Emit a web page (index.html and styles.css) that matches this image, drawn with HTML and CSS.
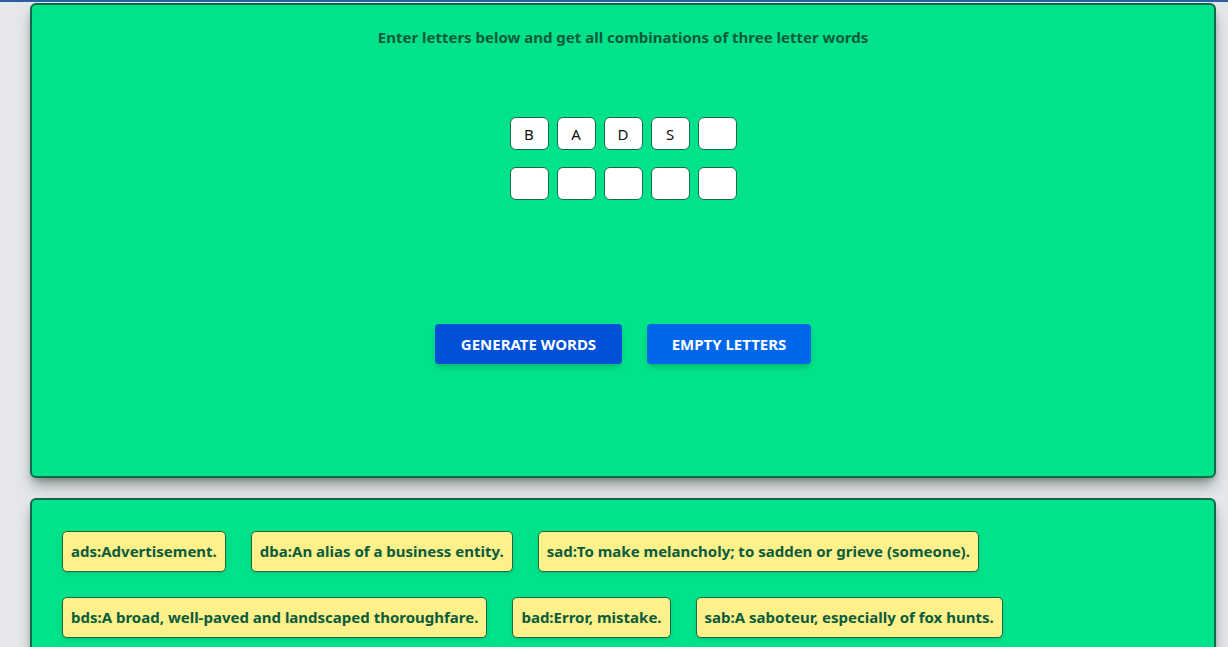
FILE: index.html
```html
<!DOCTYPE html>
<html lang="en">
<head>
<meta charset="utf-8">
<title>Three letter words</title>
<link rel="stylesheet" href="styles.css">
</head>
<body>
<div class="topline"></div>
<main class="page">
  <section class="card card-input">
    <h1 class="title">Enter letters below and get all combinations of three letter words</h1>
    <div class="letters">
      <div class="letter-row">
        <input class="letter" type="text" maxlength="1" value="B">
        <input class="letter" type="text" maxlength="1" value="A">
        <input class="letter" type="text" maxlength="1" value="D">
        <input class="letter" type="text" maxlength="1" value="S">
        <input class="letter" type="text" maxlength="1" value="">
      </div>
      <div class="letter-row">
        <input class="letter" type="text" maxlength="1" value="">
        <input class="letter" type="text" maxlength="1" value="">
        <input class="letter" type="text" maxlength="1" value="">
        <input class="letter" type="text" maxlength="1" value="">
        <input class="letter" type="text" maxlength="1" value="">
      </div>
    </div>
    <div class="actions">
      <button class="btn btn-generate">GENERATE WORDS</button>
      <button class="btn btn-empty">EMPTY LETTERS</button>
    </div>
  </section>
  <section class="card card-results">
    <div class="chips">
      <span class="chip">ads:Advertisement.</span>
      <span class="chip">dba:An alias of a business entity.</span>
      <span class="chip">sad:To make melancholy; to sadden or grieve (someone).</span>
      <span class="chip">bds:A broad, well-paved and landscaped thoroughfare.</span>
      <span class="chip">bad:Error, mistake.</span>
      <span class="chip">sab:A saboteur, especially of fox hunts.</span>
    </div>
  </section>
</main>
</body>
</html>
```
FILE: styles.css
```css
* { box-sizing: border-box; }
html, body { margin: 0; padding: 0; }
body {
  background: #e5e7eb;
  font-family: "Noto Sans", "Open Sans", sans-serif;
  color: #065f46;
  overflow: hidden;
  height: 647px;
}
.topline {
  height: 2px;
  background: #2a5ea6;
}
.page {
  padding: 1px 12px 0 30px;
  display: flex;
  flex-direction: column;
  gap: 20px;
}
.card {
  background: #00e38a;
  border: 2px solid #0b6a47;
  border-radius: 6px;
  box-shadow: 0 10px 15px -3px rgba(0,40,20,0.4), 0 4px 6px -2px rgba(0,40,20,0.25);
}
.card-input {
  height: 475px;
  padding-top: 22px;
  display: flex;
  flex-direction: column;
  align-items: center;
}
.title {
  margin: 0;
  font-size: 15px;
  font-weight: 700;
  line-height: 20px;
  color: #0a5c3c;
}
.letters {
  margin-top: 70px;
  display: flex;
  flex-direction: column;
  gap: 17px;
}
.letter-row {
  display: flex;
  gap: 8px;
}
.letter {
  width: 39px;
  height: 33px;
  border: 1px solid #1b6a4a;
  border-radius: 6px;
  background: #fff;
  text-align: center;
  font-family: "Noto Sans", sans-serif;
  font-size: 15px;
  color: #111;
  padding: 0;
  outline: none;
}
.actions {
  margin-top: 124px;
  display: flex;
  gap: 25px;
}
.btn {
  height: 40px;
  border: none;
  border-radius: 4px;
  color: #fff;
  font-family: "Noto Sans", sans-serif;
  font-size: 15px;
  font-weight: 700;
  padding: 0;
  box-shadow: 0 4px 6px -1px rgba(0,0,0,0.15), 0 2px 4px -1px rgba(0,0,0,0.08);
  cursor: pointer;
}
.btn-generate { background: #0050d8; width: 187px; }
.btn-empty { background: #0066ea; width: 164px; }
.card-results {
  height: 160px;
  padding: 31px 30px;
}
.chips {
  display: flex;
  flex-wrap: wrap;
  gap: 25px;
}
.chip {
  display: inline-block;
  background: #fef08a;
  border: 1px solid #1f6a45;
  border-radius: 5px;
  height: 41px;
  line-height: 39px;
  padding: 0 8px;
  font-size: 15px;
  font-weight: 700;
  color: #0a5c3c;
  box-shadow: 0 2px 4px rgba(0,0,0,0.12);
}
```
